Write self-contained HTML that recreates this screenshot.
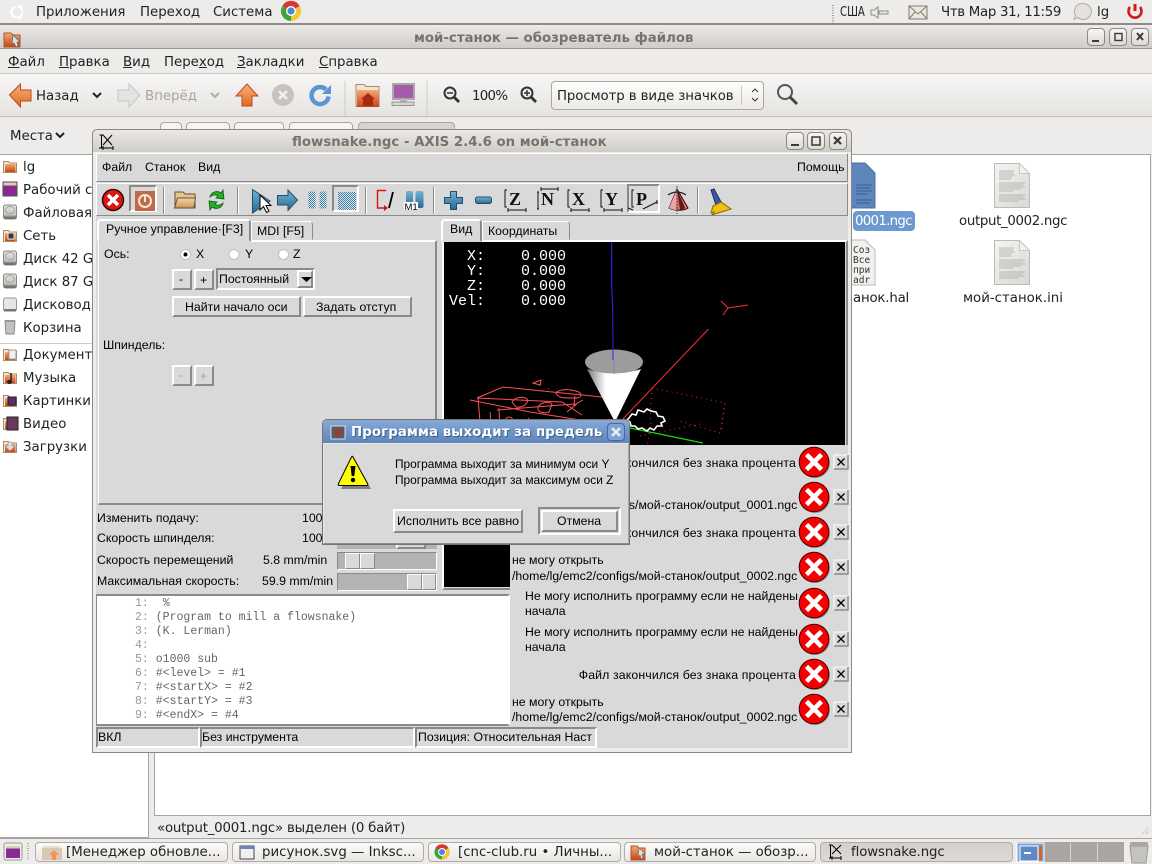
<!DOCTYPE html>
<html><head><meta charset="utf-8"><title>AXIS</title>
<style>
html,body{margin:0;padding:0;background:#edeceb}
#r{position:relative;width:1152px;height:864px;overflow:hidden;font-family:"DejaVu Sans","Noto Sans CJK SC",sans-serif;font-size:13.33px;color:#222}
.a{position:absolute;box-sizing:border-box}
.t{position:absolute;white-space:nowrap;line-height:16px;height:16px;margin-top:2px}
.k{font-family:"Liberation Sans","Noto Sans CJK SC",sans-serif;font-size:12.3px;color:#000;margin-top:0}
svg.l{position:absolute;left:0;top:0}
.b{position:absolute;box-sizing:border-box;background:#d9d9d9;border:2px solid;border-color:#fff #8a8a8a #8a8a8a #fff}
.s{position:absolute;box-sizing:border-box;background:#d9d9d9;border:2px solid;border-color:#8a8a8a #fff #fff #8a8a8a}
.wb{position:absolute;box-sizing:border-box;border:1px solid #8c8883;border-radius:4px;background:linear-gradient(#f7f6f5,#dcd9d5)}
.tb{position:absolute;box-sizing:border-box;top:842px;height:20px;border:1px solid #b0ada8;border-radius:4px;background:linear-gradient(#fbfafa,#e9e7e4)}
.pb{position:absolute;box-sizing:border-box;top:122px;height:26px;border:1px solid #aaa7a2;border-radius:4px 4px 0 0;background:#f6f5f4}
u{text-underline-offset:1px}
</style></head><body><div id="r">

<!-- panel -->
<div class="a" style="left:0;top:0;width:1152px;height:25px;background:#edeceb;border-bottom:2px solid #8e8b86"></div>
<div class="t" style="left:36px;top:3px">Приложения</div>
<div class="t" style="left:140px;top:3px">Переход</div>
<div class="t" style="left:213px;top:3px">Система</div>
<div class="t" style="left:840px;top:3px;transform:scaleX(.78);transform-origin:left;font-size:13px">США</div>
<div class="t" style="left:941px;top:3px;letter-spacing:-.3px">Чтв Мар 31, 11:59</div>
<div class="t" style="left:1097px;top:3px">lg</div>

<!-- nautilus -->
<div class="a" style="left:0;top:26px;width:1152px;height:23px;background:linear-gradient(#ebe9e7,#cfccc8);border-bottom:1px solid #9b9892"></div>
<div class="t" style="left:414px;top:29px;font-weight:bold;color:#77726c">мой-станок — обозреватель файлов</div>
<div class="wb" style="left:1087px;top:28px;width:18px;height:18px"></div>
<div class="wb" style="left:1109px;top:28px;width:18px;height:18px"></div>
<div class="wb" style="left:1131px;top:28px;width:18px;height:18px"></div>
<div class="a" style="left:0;top:49px;width:1152px;height:25px;background:#edeceb;border-bottom:1px solid #cfccc8"></div>
<div class="t" style="left:8px;top:53px"><u>Ф</u>айл</div>
<div class="t" style="left:59px;top:53px"><u>П</u>равка</div>
<div class="t" style="left:123px;top:53px"><u>В</u>ид</div>
<div class="t" style="left:164px;top:53px">Пере<u>х</u>од</div>
<div class="t" style="left:237px;top:53px"><u>З</u>акладки</div>
<div class="t" style="left:319px;top:53px"><u>С</u>правка</div>
<div class="a" style="left:0;top:74px;width:1152px;height:43px;background:linear-gradient(#f7f6f5,#e6e4e1);border-bottom:1px solid #c2bfba"></div>
<div class="t" style="left:36px;top:87px">Назад</div>
<div class="t" style="left:145px;top:87px;color:#a8a5a1">Вперёд</div>
<div class="t" style="left:472px;top:87px;letter-spacing:-.7px">100%</div>
<div class="a" style="left:551px;top:81px;width:213px;height:29px;border:1px solid #aaa7a2;border-radius:4px;background:linear-gradient(#fdfdfc,#eceae8)"></div>
<div class="t" style="left:557px;top:87px;letter-spacing:-.1px">Просмотр в виде значков</div>
<div class="a" style="left:741px;top:86px;width:1px;height:19px;background:#c8c5c0"></div>
<div class="pb" style="left:160px;width:22px"></div>
<div class="pb" style="left:186px;width:44px"></div>
<div class="pb" style="left:234px;width:50px"></div>
<div class="pb" style="left:289px;width:64px"></div>
<div class="pb" style="left:358px;width:97px;background:#d8d5d1"></div>
<div class="t" style="left:10px;top:127px">Места</div>
<!-- sidebar -->
<div class="a" style="left:0;top:154px;width:149px;height:684px;background:#fff;border:1px solid #a8a5a0;border-left:0"></div>
<div class="a" style="left:0;top:343px;width:148px;height:1px;background:#cfccc8"></div>
<div class="t" style="left:23px;top:158px">lg</div>
<div class="t" style="left:23px;top:181px">Рабочий стол</div>
<div class="t" style="left:23px;top:204px">Файловая</div>
<div class="t" style="left:23px;top:227px">Сеть</div>
<div class="t" style="left:23px;top:250px">Диск 42 GB</div>
<div class="t" style="left:23px;top:273px">Диск 87 GB</div>
<div class="t" style="left:23px;top:296px">Дисковод</div>
<div class="t" style="left:23px;top:319px">Корзина</div>
<div class="t" style="left:23px;top:346px">Документы</div>
<div class="t" style="left:23px;top:369px">Музыка</div>
<div class="t" style="left:23px;top:392px">Картинки</div>
<div class="t" style="left:23px;top:415px">Видео</div>
<div class="t" style="left:23px;top:438px">Загрузки</div>
<!-- content -->
<div class="a" style="left:154px;top:154px;width:997px;height:662px;background:#fff;border:1px solid #a8a5a0"></div>
<div class="a" style="left:853px;top:211px;width:62px;height:20px;background:#6c99d0;border-radius:4px"></div>
<div class="t" style="left:855px;top:212px;color:#fff;letter-spacing:-.7px">0001.ngc</div>
<div class="t" style="left:959px;top:212px;letter-spacing:-.33px">output_0002.ngc</div>
<div class="t" style="left:853px;top:289px;letter-spacing:-.2px">анок.hal</div>
<div class="t" style="left:963px;top:289px">мой-станок.ini</div>
<div class="t" style="left:157px;top:819px;letter-spacing:-.2px">«output_0001.ngc» выделен (0 байт)</div>
<!-- taskbar -->
<div class="a" style="left:0;top:838px;width:1152px;height:26px;background:#edeceb;border-top:1px solid #a8a5a0"></div>
<div class="tb" style="left:35px;width:193px"></div>
<div class="tb" style="left:232px;width:192px"></div>
<div class="tb" style="left:428px;width:193px"></div>
<div class="tb" style="left:624px;width:192px"></div>
<div class="tb" style="left:820px;width:193px;background:linear-gradient(#d3d0cc,#dcd9d6)"></div>
<div class="t" style="left:66px;top:843px">[Менеджер обновле...</div>
<div class="t" style="left:262px;top:843px">рисунок.svg — Inksc...</div>
<div class="t" style="left:458px;top:843px">[cnc-club.ru • Личны...</div>
<div class="t" style="left:654px;top:843px">мой-станок — обозр...</div>
<div class="t" style="left:851px;top:843px;letter-spacing:-.1px">flowsnake.ngc</div>
<div class="a" style="left:1017px;top:842px;width:107px;height:20px;background:#aaa5a0"></div>

<svg class="l" width="1152" height="864" viewBox="0 0 1152 864">
<defs>
<linearGradient id="og" x1="0" y1="0" x2="0" y2="1"><stop offset="0" stop-color="#f6b27c"/><stop offset="1" stop-color="#de6a22"/></linearGradient>
<linearGradient id="fg" x1="0" y1="0" x2="0" y2="1"><stop offset="0" stop-color="#f2a873"/><stop offset="1" stop-color="#c8441a"/></linearGradient>
<linearGradient id="dg" x1="0" y1="0" x2="0" y2="1"><stop offset="0" stop-color="#e8e6e3"/><stop offset=".7" stop-color="#c4c2be"/><stop offset="1" stop-color="#4a4846"/></linearGradient>
<linearGradient id="pg" x1="0" y1="0" x2="1" y2="1"><stop offset="0" stop-color="#f5f4f2"/><stop offset="1" stop-color="#dad8d5"/></linearGradient>
<symbol id="fold" viewBox="0 0 14 14"><path d="M.5 2.5h5l1 1.5h7v9.500h-13z" fill="#efe6d8" stroke="#b08a60"/><path d="M2 5h10.500v8H2z" fill="url(#fg)"/></symbol>
<symbol id="drv" viewBox="0 0 14 16"><rect x=".5" y="1" width="13" height="14" rx="2" fill="url(#dg)" stroke="#8a8884"/><ellipse cx="7" cy="6" rx="4.500" ry="3.500" fill="none" stroke="#a8a6a2"/></symbol>
<symbol id="doc" viewBox="0 0 36 45"><path d="M.5.500h25l10 10v34H.5z" fill="url(#pg)" stroke="#bdbbb7"/><path d="M25.500.500v10h10z" fill="#f4f3f1" stroke="#c8c6c2"/><path d="M5 8h15M5 10h14M5 12h16M5 14h13M5 16h12M5 20h26M5 22h24M5 24h26M5 26h22M5 28h14M5 32h26M5 34h24M5 36h26M5 38h20" stroke="#a8a6a2" stroke-width=".8"/></symbol>
</defs>
<!-- panel icons -->
<g fill="none" stroke="#fff" stroke-width="2"><circle cx="17" cy="12" r="5.500" stroke-dasharray="7 1.700"/></g>
<g fill="#fff"><circle cx="11" cy="12" r="1.700"/><circle cx="20" cy="6.500" r="1.700"/><circle cx="20" cy="17.500" r="1.700"/></g>
<path d="M291 11L299.700 6A10 10 0 0 0 282.300 6Z" fill="#d8392c"/><path d="M291 11L282.300 6A10 10 0 0 0 291 21Z" fill="#3ea23e"/><path d="M291 11L291 21A10 10 0 0 0 299.700 6Z" fill="#f2c932"/><circle cx="291" cy="11" r="5" fill="#fff"/><circle cx="291" cy="11" r="3.600" fill="#4a86d8"/>
<path d="M833 5v18" stroke="#a8a5a0" stroke-width="2" stroke-dasharray="1 1.500"/>
<path d="M871 10h3l4-3v11l-4-3h-3z M879 11h9v3h-9z" fill="#eceae6" stroke="#8f8c86"/>
<rect x="909" y="6" width="18" height="13" fill="#ebe8dd" stroke="#807c74"/><path d="M909 6l9 8 9-8M909 19l6-7M927 19l-6-7" fill="none" stroke="#807c74"/>
<path d="M1083 3.500a8 8 0 1 1 -5 14l-4 2 1.500-4a8 8 0 0 1 7.500-12z" fill="#e4e2da" stroke="#b0ada2"/>
<path d="M1135 4v7" stroke="#d01c1c" stroke-width="3"/><path d="M1130 7a6.500 6.500 0 1 0 10 0" fill="none" stroke="#d01c1c" stroke-width="2.600"/>
<!-- window icon & buttons -->
<path d="M4 33h7l2 2h7v12H4z" fill="url(#fg)" stroke="#a85a30"/><path d="M13 35l7 7-3 0 1 4-2 1-2-4-2 2z" fill="#ddd" stroke="#555" stroke-width=".6"/>
<path d="M1092 41h7" stroke="#3d3a36" stroke-width="2"/><rect x="1115" y="33.500" width="7" height="7" fill="none" stroke="#3d3a36" stroke-width="1.400"/><path d="M1137 33l6 7m0-7l-6 7" stroke="#3d3a36" stroke-width="2"/>
<!-- toolbar -->
<path d="M9.500 95L20.500 84v6H31v11H20.500v6z" fill="url(#og)" stroke="#bc4c14"/>
<path d="M93 93l4 4 4-4" fill="none" stroke="#222" stroke-width="2"/>
<path d="M140 95L129 84v6H118v11h11v6z" fill="#e4e3e1" stroke="#c8c6c3"/>
<path d="M211 93l4 4 4-4" fill="none" stroke="#b0aeaa" stroke-width="2"/>
<path d="M247 84l11 12h-6v10h-10V96h-6z" fill="url(#og)" stroke="#c04a14"/>
<circle cx="283" cy="95" r="11" fill="#c6c3c0"/><path d="M279 91l8 8m0-8l-8 8" stroke="#f2f1ef" stroke-width="2.600"/>
<path d="M326 89.500a8.500 8.500 0 1 0 2.500 7" fill="none" stroke="#5a96d4" stroke-width="4.500"/><path d="M331 85v9h-9z" fill="#5a96d4"/>
<path d="M345 81v37" stroke="#cfccc8"/><path d="M427 81v37" stroke="#cfccc8"/>
<path d="M356 84.500h8l2 2h13v20h-23z" fill="#efe4d6" stroke="#b08a60"/><path d="M357 90h22v17h-22z" fill="url(#fg)"/><path d="M361 99l7-6 7 6h-2v7h-10v-7z" fill="#a82a10"/>
<rect x="393" y="84" width="21" height="15" fill="#a45ca8" stroke="#aaa8a4" stroke-width="2"/><path d="M400 99h7v3h-7z" fill="#bbb"/><rect x="392" y="102" width="22" height="3.500" fill="#d8d6d2" stroke="#777" stroke-width=".7"/>
<g fill="none" stroke="#333"><circle cx="450" cy="93" r="5.500" stroke-width="2"/><path d="M454 97l5 5" stroke-width="2.800"/><path d="M447 93h6" stroke-width="1.500"/><circle cx="527" cy="93" r="5.500" stroke-width="2"/><path d="M531 97l5 5" stroke-width="2.800"/><path d="M524 93h6M527 90v6" stroke-width="1.500"/><circle cx="785" cy="92" r="7" stroke="#555" stroke-width="2"/><path d="M790 97l7 7" stroke="#444" stroke-width="3"/></g>
<path d="M752 92l3-3 3 3M752 98l3 3 3-3" fill="none" stroke="#333"/>
<path d="M56 133l4 4 4-4" fill="none" stroke="#222" stroke-width="2"/>
<!-- sidebar icons -->
<use href="#fold" x="3" y="159" width="14" height="14"/>
<rect x="3" y="182" width="14" height="14" fill="#8a2a90" stroke="#5a4a5a"/><rect x="3.500" y="182.500" width="13" height="3" fill="#d8d2a8"/>
<use href="#drv" x="3" y="204" width="14" height="16"/>
<use href="#fold" x="3" y="228" width="14" height="14"/><rect x="8" y="233" width="6" height="6" fill="#333" stroke="#eee"/>
<use href="#drv" x="3" y="250" width="14" height="16"/>
<use href="#drv" x="3" y="273" width="14" height="16"/>
<rect x="3.500" y="298" width="13" height="13" rx="2" fill="#e8e6e3" stroke="#9a9894"/><rect x="4" y="309" width="12" height="2.500" fill="#777"/>
<path d="M5 321h10l-1 13H6z" fill="#c4c2be" stroke="#8a8884"/><rect x="5" y="320" width="10" height="2" fill="#999"/>
<use href="#fold" x="3" y="347" width="14" height="14"/><rect x="9" y="350" width="7" height="9" fill="#f2f1ee" stroke="#999"/>
<use href="#fold" x="3" y="370" width="14" height="14"/><path d="M11 373v9" stroke="#222" stroke-width="1.500"/><ellipse cx="9.500" cy="382" rx="2.500" ry="2" fill="#222"/>
<use href="#fold" x="3" y="393" width="14" height="14"/><rect x="8" y="397" width="8" height="8" fill="#5c2b68" stroke="#222"/>
<use href="#fold" x="3" y="416" width="14" height="14"/><rect x="7" y="417" width="11" height="13" fill="#6a3a5a" stroke="#222"/>
<use href="#fold" x="3" y="439" width="14" height="14"/><path d="M8 442h4v4h3l-5 5-5-5h3z" fill="#ddd" stroke="#999" stroke-width=".6"/>
<!-- files -->
<use href="#doc" x="994" y="163" width="36" height="45"/>
<use href="#doc" x="994" y="240" width="36" height="45"/>
<path d="M840 163h25l10 10v35h-35z" fill="#5c86bc" stroke="#4a70a4"/><path d="M856 185h16M856 188h14M856 191h16M856 194h12M856 200h16M856 203h14" stroke="#3c5f90"/>
<path d="M840 240h25l10 10v35h-35z" fill="#f2f1ef" stroke="#bdbbb7"/>
<g font-family="DejaVu Sans Mono,Liberation Mono,monospace" font-size="9.500" fill="#333"><text x="853" y="253">Соз</text><text x="853" y="263">Все</text><text x="853" y="273">при</text><text x="853" y="283">adr</text></g>
<!-- task icons -->
<rect x="4" y="843" width="18" height="17" rx="2" fill="#f0eeec" stroke="#9a9793"/><rect x="6" y="846" width="14" height="12" fill="#8a2a90"/><rect x="6" y="846" width="14" height="2.500" fill="#d8d2a8"/>
<path d="M28 843v17" stroke="#b0ada8" stroke-width="2" stroke-dasharray="1 1.500"/>
<path d="M42 848h20v12H42z" fill="#d8c8b4"/><path d="M44 846h14l3 2H42z" fill="#e8dccc"/><path d="M54 850l5 5h-3v5h-4v-5h-3z" fill="#f0945a"/>
<rect x="240" y="846" width="14" height="13" fill="#f2f1ee" stroke="#445"/><rect x="240" y="846" width="14" height="3" fill="#6a86b8"/>
<circle cx="442" cy="852" r="7.500" fill="#3ea23e"/><path d="M442 852L448.500 848A7.500 7.500 0 0 0 435.500 848Z" fill="#d8392c"/><path d="M442 852V859.500A7.500 7.500 0 0 0 448.500 848Z" fill="#f2c932"/><circle cx="442" cy="852" r="3.500" fill="#4a86d8" stroke="#fff"/>
<path d="M631 846h6l2 2h6v12h-14z" fill="url(#fg)" stroke="#a85a30"/><path d="M639 848l6 6-3 0 1 4-2 1-1-4-2 2z" fill="#ddd" stroke="#555" stroke-width=".5"/>
<g fill="none" stroke="#000"><path d="M829 845h3m-1.500 0v13m-1.500 0h3M832 845l9 9m0-9l-9 9M832 858h9M832 856v4m9-4v4" stroke-width="1"/></g>
<rect x="1017" y="843" width="27" height="19" fill="#7ea2d6" stroke="#fff"/><rect x="1020" y="846" width="18" height="15" fill="#5e88c6" stroke="#fff"/><rect x="1024" y="852" width="7" height="2" fill="#fff"/><rect x="1039" y="846" width="3" height="14" fill="#d8641c"/>
<path d="M1070.500 843v18M1097.500 843v18" stroke="#d8d6d2"/>
<path d="M1130 846h18l-2 17h-14z" fill="#c4c3bf" stroke="#9a9995"/><rect x="1130" y="842" width="18" height="4" rx="1" fill="#a8a7a3"/>
<path d="M1146 834l3-3M1142 834l7-7M1149 834h0" stroke="#b0ada8" stroke-dasharray="1 1"/>
</svg>

<!-- AXIS -->
<div class="a" style="left:92px;top:129px;width:760px;height:624px;background:#d9d9d9;border:1px solid #8c8883;border-radius:5px 5px 0 0"></div>
<div class="a" style="left:93px;top:130px;width:758px;height:22px;background:linear-gradient(#ebe9e7,#cfccc8);border-radius:5px 5px 0 0"></div>
<div class="a" style="left:93px;top:152px;width:758px;height:600px;background:#edeceb"></div>
<div class="a" style="left:96px;top:153px;width:752px;height:595px;background:#d9d9d9"></div>
<div class="t" style="left:292px;top:133px;font-weight:bold;color:#77726c">flowsnake.ngc - AXIS 2.4.6 on мой-станок</div>
<div class="wb" style="left:786px;top:132px;width:18px;height:18px"></div>
<div class="wb" style="left:807px;top:132px;width:18px;height:18px"></div>
<div class="wb" style="left:829px;top:132px;width:18px;height:18px"></div>
<div class="a" style="left:96px;top:153px;width:752px;height:29px;border:1px solid;border-color:#fff #8a8a8a #8a8a8a #fff"></div>
<div class="t k" style="left:102px;top:159px">Файл</div>
<div class="t k" style="left:145px;top:159px">Станок</div>
<div class="t k" style="left:198px;top:159px">Вид</div>
<div class="t k" style="left:797px;top:159px">Помощь</div>
<div class="a" style="left:96px;top:183px;width:752px;height:33px;border:1px solid;border-color:#fff #8a8a8a #8a8a8a #fff"></div>
<div class="s" style="left:129px;top:185px;width:28px;height:27px"></div>
<div class="s" style="left:332px;top:185px;width:27px;height:27px"></div>
<div class="s" style="left:627px;top:184px;width:33px;height:29px"></div>

<!-- left notebook -->
<div class="a" style="left:98px;top:240px;width:339px;height:265px;border:2px solid;border-left-width:1px;border-color:#fff #8a8a8a #8a8a8a #fff"></div>
<div class="a" style="left:97px;top:219px;width:154px;height:23px;background:#d9d9d9;border:2px solid;border-color:#fff #8a8a8a transparent #fff;border-radius:4px 4px 0 0"></div>
<div class="a" style="left:251px;top:221px;width:62px;height:19px;border:1px solid;border-color:#fff #8a8a8a transparent #fff;border-radius:0 4px 0 0"></div>
<div class="t k" style="left:106px;top:221px">Ручное управление·[F3]</div>
<div class="t k" style="left:257px;top:223px">MDI [F5]</div>
<div class="t k" style="left:104px;top:246px">Ось:</div>
<div class="t k" style="left:196px;top:246px">X</div>
<div class="t k" style="left:245px;top:246px">Y</div>
<div class="t k" style="left:293px;top:246px">Z</div>
<div class="b" style="left:172px;top:269px;width:20px;height:21px"></div>
<div class="b" style="left:194px;top:269px;width:20px;height:21px"></div>
<div class="t k" style="left:179px;top:271px">-</div>
<div class="t k" style="left:200px;top:272px">+</div>
<div class="a" style="left:216px;top:268px;width:99px;height:22px;border:2px solid;border-color:#8a8a8a #fff #fff #8a8a8a"></div>
<div class="b" style="left:297px;top:270px;width:16px;height:18px"></div>
<div class="t k" style="left:219px;top:271px">Постоянный</div>
<div class="b" style="left:172px;top:296px;width:129px;height:21px"></div>
<div class="b" style="left:303px;top:296px;width:109px;height:21px"></div>
<div class="t k" style="left:185px;top:299px">Найти начало оси</div>
<div class="t k" style="left:316px;top:299px">Задать отступ</div>
<div class="t k" style="left:103px;top:337px">Шпиндель:</div>
<div class="b" style="left:172px;top:365px;width:20px;height:21px"></div>
<div class="b" style="left:194px;top:365px;width:20px;height:21px"></div>
<div class="t k" style="left:179px;top:367px;color:#a3a3a3">-</div>
<div class="t k" style="left:200px;top:368px;color:#a3a3a3">+</div>

<!-- sliders area -->
<div class="t k" style="left:97px;top:510px">Изменить подачу:</div>
<div class="t k" style="left:302px;top:510px">100</div>
<div class="t k" style="left:97px;top:530px">Скорость шпинделя:</div>
<div class="t k" style="left:302px;top:530px">100</div>
<div class="t k" style="left:97px;top:552px">Скорость перемещений</div>
<div class="t k" style="left:263px;top:552px">5.8 mm/min</div>
<div class="t k" style="left:97px;top:573px">Максимальная скорость:</div>
<div class="t k" style="left:262px;top:573px">59.9 mm/min</div>
<div class="a" style="left:337px;top:531px;width:100px;height:18px;background:#b3b3b3"></div>
<div class="b" style="left:396px;top:531px;width:30px;height:18px"></div>
<div class="a" style="left:337px;top:552px;width:100px;height:18px;background:#b3b3b3;border:1px solid;border-color:#8a8a8a #fff #fff #8a8a8a"></div>
<div class="b" style="left:345px;top:553px;width:15px;height:16px;border-width:1px"></div>
<div class="b" style="left:360px;top:553px;width:15px;height:16px;border-width:1px"></div>
<div class="a" style="left:337px;top:573px;width:100px;height:18px;background:#b3b3b3;border:1px solid;border-color:#8a8a8a #fff #fff #8a8a8a"></div>
<div class="b" style="left:407px;top:574px;width:15px;height:16px;border-width:1px"></div>
<div class="b" style="left:422px;top:574px;width:14px;height:16px;border-width:1px"></div>

<!-- right notebook -->
<div class="a" style="left:442px;top:240px;width:406px;height:350px;border:2px solid;border-color:#fff #8a8a8a #8a8a8a #fff"></div>
<div class="a" style="left:441px;top:219px;width:41px;height:23px;background:#d9d9d9;border:2px solid;border-color:#fff #8a8a8a transparent #fff;border-radius:4px 4px 0 0"></div>
<div class="a" style="left:482px;top:221px;width:88px;height:19px;border:1px solid;border-color:#fff #8a8a8a transparent #fff;border-radius:0 4px 0 0"></div>
<div class="t k" style="left:450px;top:221px">Вид</div>
<div class="t k" style="left:488px;top:223px">Координаты</div>
<div class="a" style="left:444px;top:242px;width:401px;height:345px;background:#000"></div>
<div class="a" style="left:449px;top:249px;color:#fff;font-family:'Liberation Mono',monospace;font-size:15px;line-height:15px;white-space:pre">  X:    0.000
  Y:    0.000
  Z:    0.000
Vel:    0.000</div>

<svg class="l" width="1152" height="864" viewBox="0 0 1152 864">
<defs>
<linearGradient id="cone" x1="0" y1="0" x2="1" y2="0"><stop offset="0" stop-color="#777"/><stop offset=".35" stop-color="#fff"/><stop offset="1" stop-color="#fff"/></linearGradient>
<linearGradient id="bl" x1="0" y1="0" x2="0" y2="1"><stop offset="0" stop-color="#7ab2d0"/><stop offset="1" stop-color="#256a94"/></linearGradient>
<pattern id="dz" width="2" height="2" patternUnits="userSpaceOnUse"><rect width="2" height="2" fill="#dfe8ee"/><rect width="1" height="1" fill="#3d7ea6"/><rect x="1" y="1" width="1" height="1" fill="#3d7ea6"/></pattern>
<linearGradient id="tn" x1="0" y1="0" x2="0" y2="1"><stop offset="0" stop-color="#f2d6a6"/><stop offset="1" stop-color="#c8965c"/></linearGradient>
</defs>
<!-- AXIS controls -->
<path d="M791 145h8" stroke="#3d3a36" stroke-width="2"/><rect x="812" y="137" width="8" height="8" fill="none" stroke="#3d3a36" stroke-width="1.500"/><path d="M834 137l7 7m0-7l-7 7" stroke="#3d3a36" stroke-width="2.200"/>
<g fill="none" stroke="#000" stroke-width="1"><path d="M99.500 135h4m-2 0v13m-2.500 0h5M103 135l9 10m0-10l-9 10M103 148h10M103 146v4m10-4v4"/></g>
<!-- toolbar icons -->
<circle cx="113" cy="200" r="10.500" fill="#d81818" stroke="#300" stroke-width="1.400"/><path d="M108 195l10 10m0-10l-10 10" stroke="#fff" stroke-width="3.400"/>
<rect x="135" y="191" width="20" height="20" fill="#c06a48"/><circle cx="145" cy="201" r="6" fill="none" stroke="#f4e6da" stroke-width="2"/><path d="M145 196v6" stroke="#f4e6da" stroke-width="2"/>
<path d="M163.500 187v27M237.500 187v27M365.500 187v27M433.500 187v27M697.500 187v27" stroke="#8a8a8a"/><path d="M164.500 187v27M238.500 187v27M366.500 187v27M434.500 187v27M698.500 187v27" stroke="#fff"/>
<path d="M175 192h8l2 2h10v14h-20z" fill="#e4c590" stroke="#6a5030"/><path d="M174.500 208l3-10h18l-1.500 10z" fill="url(#tn)" stroke="#6a5030"/>
<path d="M210 197c1-5 7-7 11-4l2-3 1 9-8-1 2-2c-2-2-6-1-8 1z" fill="#25b025" stroke="#0a5a0a" stroke-width=".8"/><path d="M223 203c-1 5-7 7-11 4l-2 3-1-9 8 1-2 2c2 2 6 1 8-1z" fill="#25b025" stroke="#0a5a0a" stroke-width=".8"/>
<path d="M252.500 189.500L270 201 252.500 213z" fill="url(#bl)" stroke="#1f4f70"/>
<path d="M260 195v15l3.500-3.500 3 6 2.500-1.300-3-5.700h5z" fill="#fff" stroke="#000"/>
<path d="M277.500 195.500H288V190l9.500 10L288 210.500V205H277.500z" fill="url(#bl)" stroke="#1f4f70"/>
<rect x="308.500" y="191.500" width="7" height="17" rx="1.500" fill="url(#dz)"/><rect x="319.500" y="191.500" width="7" height="17" rx="1.500" fill="url(#dz)"/>
<rect x="338" y="192" width="18" height="18" fill="url(#dz)"/>
<path d="M377 190.500h9M377.500 190v18h8" fill="none" stroke="#e01010" stroke-width="1.400"/><path d="M384 205l4 3-4 3z" fill="#e01010"/><path d="M393 192l-4 16" stroke="#000" stroke-width="1.800"/>
<rect x="406" y="191" width="7" height="17" rx="2" fill="url(#bl)"/><rect x="415.500" y="191" width="8" height="17" rx="2" fill="url(#bl)"/>
<rect x="404" y="202" width="14" height="8" fill="#fff"/>
<text x="404.500" y="210" font-family="Liberation Sans" font-size="9.500" fill="#000">M1</text>
<path d="M450.500 191.500h6v6h6v6h-6v6h-6v-6h-6v-6h6z" fill="url(#bl)" stroke="#1f4f70"/>
<rect x="475.500" y="197" width="16" height="6.500" rx="2" fill="url(#bl)" stroke="#1f4f70"/>
<g font-family="Liberation Serif" font-weight="bold" font-size="18" fill="#111"><text x="509" y="205">Z</text><text x="572" y="205">X</text><text x="605" y="205">Y</text><text x="636" y="205">P</text><text x="541" y="205">N</text></g>
<g fill="none" stroke="#111"><path d="M507 190h-2v17h2M508 210h18M508 208v4M526 208v4"/><path d="M570 190h-2v17h2M571 210h18M571 208v4M589 208v4"/><path d="M603 190h-2v17h2M604 210h18M604 208v4M622 208v4"/><path d="M538 192v17M537 192h2M537 209h2M541 189h17M541 187v4M558 187v4"/><path d="M634 190h-2v17h2M633 210l-5-2M643 209l14-7M657 200v4"/></g>
<path d="M677 189l-8 19c5 3 15 3 19 0z" fill="#d87070" stroke="#400"/><path d="M677 189l-8 19c2 1 5 2 7 2z" fill="#e8a8a0"/><path d="M677 189l8 19c-1 1-3 2-5 2z" fill="#601818"/><path d="M668 195q9-6 18 0" fill="none" stroke="#222" stroke-width="1.300"/><path d="M677 186v28" stroke="#333" stroke-dasharray="1.500 1.500"/>
<path d="M711 190l3-1 7 13-5 3z" fill="#3a5aa8" stroke="#1a2a58"/><path d="M713 206l8-4 10 7-16 5-3 1 2-3-3 1z" fill="#f0c010" stroke="#8a6800"/>
<!-- radios -->
<circle cx="185.500" cy="254.500" r="5" fill="#fff" stroke="#c0c0c0"/><circle cx="185.500" cy="254.500" r="2" fill="#000"/><circle cx="234" cy="254.500" r="5" fill="#fff" stroke="#c0c0c0"/><circle cx="283.500" cy="254.500" r="5" fill="#fff" stroke="#c0c0c0"/>
<path d="M301 277h11l-5.500 5z" fill="#000"/>
<!-- canvas -->
<path d="M611.700 242v46l1 20 .5 65" stroke="#2a2af0" fill="none"/>
<ellipse cx="614" cy="362" rx="29" ry="12.500" fill="#9c9c9c"/>
<path d="M587 369L615 422 641 369Q614 378 587 369z" fill="url(#cone)"/>
<path d="M613 345v15" stroke="#2a2af0"/><path d="M614 360v14" stroke="#8080d0"/>
<path d="M708.500 329L620 422" stroke="#ff3030"/>
<path d="M728 308l-7-7M728 308l20-3M728 308l-5 7" stroke="#ff3030" fill="none"/>
<g fill="none" stroke="#ff4f58" stroke-width="1">
<path d="M477 398l26-11 99 10M477 398l85 4 20 13M478 398l2 24M497 410l77-6M470 400l60 12 50 8"/>
<path d="M540 385l-7-2 8-3-1 6M548 389h1M556 393c3-4 12-4 20-2 7 2 6 7 0 7-8 0-18 1-20-5zM512 402c3-5 11-6 15-3 2 4-4 9-11 8zM538 407c3-5 10-6 14-3l-3 8c-6 2-12 0-11-5zM575 396l-1 9 9-5M567 412l12-10"/>
<path d="M490 412l2 20M499 408l1 25M505 420c2-4 6-4 8 0v12M484 421c3-3 5-1 5 1v9M528 418c3 3 5 8 5 14"/>
</g>
<g fill="none" stroke="#ff2020" stroke-dasharray="1 4"><path d="M652 388l73 15-5 30-40-12M652 388l-2 34M725 403l-4 29 M651 423l-4 24M640 436l60-12"/></g>
<path d="M630 428l73 15" stroke="#10e010" stroke-width="1.200"/>
<path d="M629 418l3-4 4 1 2-5 6 2 3-3 4 2 5 1 2 4 5 1 2 4-4 2 1 3-5 0-3 4-4-2-3 3-5-3-4 1-3-3-4 0-1-4-3-2z" fill="none" stroke="#fff" stroke-width="1.600"/>
</svg>

<!-- notifications -->
<div class="a" style="left:510px;top:445px;width:338px;height:303px;background:#d9d9d9"></div>
<div class="t k" style="right:356px;top:455px;letter-spacing:.13px">Файл закончился без знака процента</div>
<div class="t k" style="left:512px;top:480px">не могу открыть</div>
<div class="t k" style="left:512px;top:497px">/home/lg/emc2/configs/мой-станок/output_0001.ngc</div>
<div class="t k" style="right:356px;top:525px;letter-spacing:.13px">Файл закончился без знака процента</div>
<div class="t k" style="left:512px;top:552px">не могу открыть</div>
<div class="t k" style="left:512px;top:568px">/home/lg/emc2/configs/мой-станок/output_0002.ngc</div>
<div class="t k" style="left:525px;top:588px;letter-spacing:-.02px">Не могу исполнить программу если не найдены</div>
<div class="t k" style="left:525px;top:603px">начала</div>
<div class="t k" style="left:525px;top:624px;letter-spacing:-.02px">Не могу исполнить программу если не найдены</div>
<div class="t k" style="left:525px;top:639px">начала</div>
<div class="t k" style="right:356px;top:667px;letter-spacing:.13px">Файл закончился без знака процента</div>
<div class="t k" style="left:512px;top:694px">не могу открыть</div>
<div class="t k" style="left:512px;top:709px">/home/lg/emc2/configs/мой-станок/output_0002.ngc</div>

<svg class="l" width="1152" height="864" viewBox="0 0 1152 864">
<defs><g id="err"><circle cx="1" cy="1" r="15" fill="#9a9a9a"/><circle r="14.800" fill="#f40000" stroke="#400" stroke-width="1"/><path d="M-7.500-7.500l15 15m0-15l-15 15" stroke="#fff" stroke-width="4.600"/></g>
<g id="xb"><rect x="-7" y="-7" width="14" height="14" fill="#d9d9d9" stroke="#fff"/><path d="M7-7v14h-14" fill="none" stroke="#8a8a8a" stroke-width="1.400"/><path d="M-3.500-3.500l7 7m0-7l-7 7" stroke="#000" stroke-width="1.300"/></g></defs>
<use href="#err" x="814" y="462"/><use href="#err" x="814" y="497"/><use href="#err" x="814" y="532"/><use href="#err" x="814" y="567"/><use href="#err" x="814" y="603"/><use href="#err" x="814" y="639"/><use href="#err" x="814" y="674"/><use href="#err" x="814" y="709"/>
<use href="#xb" x="841" y="462"/><use href="#xb" x="841" y="497"/><use href="#xb" x="841" y="532"/><use href="#xb" x="841" y="567"/><use href="#xb" x="841" y="603"/><use href="#xb" x="841" y="639"/><use href="#xb" x="841" y="674"/><use href="#xb" x="841" y="709"/>
</svg>

<!-- text area -->
<div class="a" style="left:96px;top:594px;width:414px;height:132px;background:#fff;border:2px solid;border-left-width:1px;border-color:#8a8a8a transparent #8a8a8a #8a8a8a"></div>
<div class="a" style="left:135px;top:597px;color:#666;font-family:'Liberation Mono',monospace;font-size:11.500px;line-height:14px;white-space:pre;word-spacing:.05px"><span style="color:#999">1:</span>  %
<span style="color:#999">2:</span> (Program to mill a flowsnake)
<span style="color:#999">3:</span> (K. Lerman)
<span style="color:#999">4:</span>
<span style="color:#999">5:</span> o1000 sub
<span style="color:#999">6:</span> #&lt;level&gt; = #1
<span style="color:#999">7:</span> #&lt;startX&gt; = #2
<span style="color:#999">8:</span> #&lt;startY&gt; = #3
<span style="color:#999">9:</span> #&lt;endX&gt; = #4</div>
<!-- status -->
<div class="a" style="left:96px;top:727px;width:104px;height:21px;border:2px solid;border-color:#8a8a8a #fff #fff #8a8a8a"></div>
<div class="a" style="left:200px;top:727px;width:215px;height:21px;border:2px solid;border-color:#8a8a8a #fff #fff #8a8a8a"></div>
<div class="a" style="left:415px;top:727px;width:182px;height:21px;border:2px solid;border-color:#8a8a8a #fff #fff #8a8a8a"></div>
<div class="t k" style="left:98px;top:729px">ВКЛ</div>
<div class="t k" style="left:202px;top:729px">Без инструмента</div>
<div class="t k" style="left:418px;top:729px;width:177px;overflow:hidden">Позиция: Относительная Наст</div>

<!-- dialog -->
<div class="a" style="left:322px;top:419px;width:308px;height:126px;background:#d9d9d9;border:1px solid #77746f;border-radius:5px 5px 0 0;box-shadow:inset 0 0 0 2px #d9d9d9"></div>
<div class="a" style="left:323px;top:420px;width:306px;height:23px;background:linear-gradient(#86a9d6,#5d86bc);border-radius:4px 4px 0 0"></div>
<div class="a" style="left:323px;top:443px;width:306px;height:101px;border:1px solid;border-color:#e8e8e8 #a8a8a8 #8a8a8a #e8e8e8"></div>
<div class="t" style="left:351px;top:423px;font-weight:bold;color:#fff;text-shadow:1px 1px 1px #3a5a88;letter-spacing:.1px">Программа выходит за предель</div>
<div class="a" style="left:607px;top:423px;width:18px;height:18px;border:1px solid #47689a;border-radius:4px;background:#7ea3d3"></div>
<div class="t k" style="left:395px;top:456px;font-size:11.9px">Программа выходит за минимум оси Y</div>
<div class="t k" style="left:395px;top:472px;font-size:11.9px">Программа выходит за максимум оси Z</div>
<div class="b" style="left:393px;top:509px;width:130px;height:24px"></div>
<div class="t k" style="left:397px;top:513px;font-size:12.4px">Исполнить все равно</div>
<div class="a" style="left:538px;top:507px;width:83px;height:28px;border:2px solid;border-color:#8a8a8a #fff #fff #8a8a8a"></div>
<div class="b" style="left:541px;top:510px;width:77px;height:22px"></div>
<div class="t k" style="left:557px;top:513px">Отмена</div>
<svg class="l" width="1152" height="864" viewBox="0 0 1152 864">
<rect x="331" y="426" width="14" height="13" fill="#5a5a5a" stroke="#ddd"/><circle cx="338" cy="432.500" r="3" fill="#b03030"/>
<path d="M612 428l8 8m0-8l-8 8" stroke="#e8eef8" stroke-width="2.500"/>
<path d="M354 460l15 27h-30z" fill="#808080" transform="translate(2 2)"/>
<path d="M353 457l14.500 26.500q1 2-1 2h-27q-2 0-1-2l13-26.500q1-1.500 1.500 0z" fill="#ffff00" stroke="#000" stroke-width="1"/>
<path d="M350.500 466h5l-1.200 10h-2.600z" fill="#000"/><circle cx="353" cy="480" r="2.200" fill="#000"/>
</svg>
</div></body></html>
